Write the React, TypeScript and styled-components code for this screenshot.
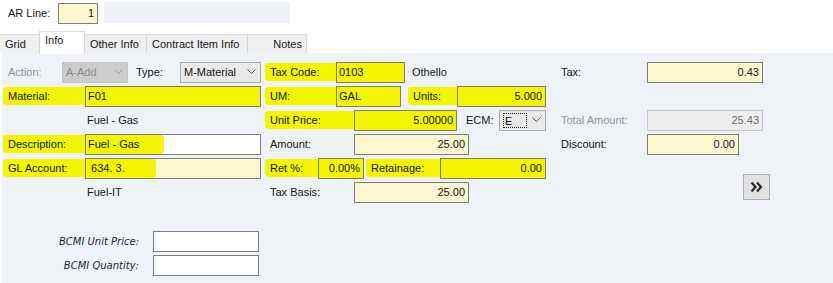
import React from "react";
import styled, { createGlobalStyle, css } from "styled-components";

const GlobalStyle = createGlobalStyle`
  html, body {
    margin: 0;
    padding: 0;
    background: #ffffff;
  }
  body {
    font-family: "Liberation Sans", Arial, sans-serif;
    font-size: 11px;
    color: #141420;
  }
`;

const MARK = "#f5f500";

const Screen = styled.div`
  width: 833px;
  height: 283px;
  overflow: hidden;
  display: flex;
  flex-direction: column;
  background: #ffffff;
`;

const TopBar = styled.div`
  height: 31px;
  display: flex;
  align-items: flex-start;
  padding: 2px 0 0 8px;
  box-sizing: border-box;
`;

const TopLabel = styled.div`
  width: 50px;
  height: 22px;
  line-height: 22px;
`;

const Blank = styled.div`
  width: 186px;
  height: 21px;
  margin-left: 6px;
  background: #eef2f6;
`;

const TabStrip = styled.div`
  display: flex;
  align-items: flex-end;
  height: 22px;
`;

const Tab = styled.div<{ $w: number; $active?: boolean; $right?: boolean }>`
  width: ${(p) => p.$w}px;
  box-sizing: border-box;
  height: ${(p) => (p.$active ? 22 : 19)}px;
  line-height: ${(p) => (p.$active ? 16 : 18)}px;
  padding: 0 ${(p) => (p.$right ? 4 : 0)}px 0 ${(p) => (p.$right ? 0 : 5)}px;
  text-align: ${(p) => (p.$right ? "right" : "left")};
  background: ${(p) => (p.$active ? "#ffffff" : "#f0f0f0")};
  border: 1px solid #d9d9d9;
  border-bottom: none;
  margin-left: -1px;
  position: relative;
  z-index: ${(p) => (p.$active ? 1 : 0)};
  ${(p) =>
    p.$active &&
    css`
      margin-bottom: -1px;
      height: 23px;
    `}
`;

const Panel = styled.div`
  flex: 1;
  margin-left: 2px;
  background: #eff3f7;
  display: flex;
  flex-direction: column;
  padding: 7px 0 0 6px;
  box-sizing: border-box;
`;

const Columns = styled.div`
  display: flex;
`;

const Column = styled.div<{ $w?: number }>`
  display: flex;
  flex-direction: column;
  ${(p) => (p.$w ? `width: ${p.$w}px;` : "flex: 1;")}
`;

const Row = styled.div`
  height: 24px;
  display: flex;
  align-items: center;
`;

const Label = styled.div<{ $w: number; $gap?: number; $gray?: boolean; $mark?: boolean }>`
  width: ${(p) => p.$w}px;
  flex: none;
  box-sizing: border-box;
  margin-left: ${(p) => p.$gap ?? 0}px;
  color: ${(p) => (p.$gray ? "#8f939c" : "#141420")};
  white-space: nowrap;
  height: 18px;
  line-height: 18px;
  ${(p) =>
    p.$mark &&
    css`
      background: ${MARK};
      margin-left: ${(p.$gap ?? 0) - 5}px;
      width: ${p.$w + 5}px;
      padding-left: 5px;
      border-radius: 3px 0 0 4px;
    `}
`;

type Tone = "yellow" | "mark" | "white" | "disabled";

const fieldBg: Record<Tone, string> = {
  yellow: "#fbf8d0",
  mark: MARK,
  white: "#ffffff",
  disabled: "#efefef",
};

const Field = styled.div<{ $w: number; $tone?: Tone; $right?: boolean }>`
  width: ${(p) => p.$w}px;
  flex: none;
  height: 21px;
  box-sizing: border-box;
  border: 1px solid ${(p) => (p.$tone === "disabled" ? "#c6c6c6" : "#7d7d7d")};
  background: ${(p) => fieldBg[p.$tone ?? "yellow"]};
  color: ${(p) => (p.$tone === "disabled" ? "#6e6e6e" : "#141420")};
  padding: 0 3px 0 2px;
  line-height: 19px;
  text-align: ${(p) => (p.$right ? "right" : "left")};
  white-space: nowrap;
  overflow: hidden;
`;

const TextMark = styled.span<{ $w: number }>`
  display: inline-block;
  width: ${(p) => p.$w}px;
  background: ${MARK};
  margin-left: -2px;
  padding-left: 2px;
  border-radius: 0 4px 4px 0;
`;

const Plain = styled.div<{ $gap?: number }>`
  margin-left: ${(p) => p.$gap ?? 0}px;
  padding-left: 2px;
  white-space: nowrap;
`;

const Select = styled.div<{ $w: number; $disabled?: boolean }>`
  width: ${(p) => p.$w}px;
  flex: none;
  height: 21px;
  box-sizing: border-box;
  display: flex;
  align-items: center;
  justify-content: space-between;
  padding: 0 4px 0 3px;
  border: 1px solid ${(p) => (p.$disabled ? "#c4c4c4" : "#adadad")};
  background: ${(p) => (p.$disabled ? "#cccccc" : "#e9e9e9")};
  color: ${(p) => (p.$disabled ? "#8a8a8a" : "#141420")};
`;

const Focus = styled.span`
  display: inline-block;
  width: 24px;
  height: 15px;
  line-height: 15px;
  box-sizing: border-box;
  border: 1px dotted #222;
  padding-left: 1px;
`;

const Chevron = ({ color }: { color: string }) => (
  <svg width="9" height="6" viewBox="0 0 9 6">
    <polyline points="0.5,0.5 4.5,4.5 8.5,0.5" fill="none" stroke={color} strokeWidth="1" />
  </svg>
);

const MoreButton = styled.div`
  width: 27px;
  height: 26px;
  box-sizing: border-box;
  margin: 18px 0 0 182px;
  background: #e1e1e1;
  border: 1px solid #adadad;
  display: flex;
  align-items: center;
  justify-content: center;
`;

const BcmiLabel = styled.div`
  width: 145px;
  padding-right: 14px;
  box-sizing: border-box;
  text-align: right;
  font-family: "DejaVu Sans", Verdana, sans-serif;
  font-size: 10px;
  font-style: italic;
  color: #1c1c38;
`;

export default function App() {
  return (
    <Screen>
      <GlobalStyle />
      <TopBar>
        <TopLabel>AR Line:</TopLabel>
        <Field $w={40} $right style={{ marginTop: 1 }}>1</Field>
        <Blank />
      </TopBar>
      <TabStrip>
        <Tab $w={41}>Grid</Tab>
        <Tab $w={46} $active>Info</Tab>
        <Tab $w={63}>Other Info</Tab>
        <Tab $w={102}>Contract Item Info</Tab>
        <Tab $w={60} $right>Notes</Tab>
      </TabStrip>
      <Panel>
        <Columns>
          <Column $w={262}>
            <Row>
              <Label $w={54} $gray>Action:</Label>
              <Select $w={66} $disabled>
                A-Add <Chevron color="#9a9a9a" />
              </Select>
              <Label $w={44} $gap={8}>Type:</Label>
              <Select $w={81}>
                M-Material <Chevron color="#555" />
              </Select>
            </Row>
            <Row>
              <Label $w={77} $mark>Material:</Label>
              <Field $w={176} $tone="mark">F01</Field>
            </Row>
            <Row>
              <Plain $gap={77}>Fuel - Gas</Plain>
            </Row>
            <Row>
              <Label $w={77} $mark>Description:</Label>
              <Field $w={176} $tone="white">
                <TextMark $w={76}>Fuel - Gas</TextMark>
              </Field>
            </Row>
            <Row>
              <Label $w={77} $mark>GL Account:</Label>
              <Field $w={176}>
                <TextMark $w={68}>&nbsp;634. 3.</TextMark>
              </Field>
            </Row>
            <Row>
              <Plain $gap={77}>Fuel-IT</Plain>
            </Row>
          </Column>
          <Column $w={291}>
            <Row>
              <Label $w={66} $mark>Tax Code:</Label>
              <Field $w={69} $tone="mark">0103</Field>
              <Plain $gap={5}>Othello</Plain>
            </Row>
            <Row>
              <Label $w={66} $mark>UM:</Label>
              <Field $w={65} $tone="mark">GAL</Field>
              <Label $w={44} $gap={12} $mark>Units:</Label>
              <Field $w={89} $tone="mark" $right>5.000</Field>
            </Row>
            <Row>
              <Label $w={84} $mark>Unit Price:</Label>
              <Field $w={103} $tone="mark" $right>5.00000</Field>
              <Label $w={33} $gap={9}>ECM:</Label>
              <Select $w={47}>
                <Focus>E</Focus>
                <Chevron color="#555" />
              </Select>
            </Row>
            <Row>
              <Label $w={84}>Amount:</Label>
              <Field $w={115} $right>25.00</Field>
            </Row>
            <Row>
              <Label $w={48} $mark>Ret %:</Label>
              <Field $w={46} $tone="mark" $right>0.00%</Field>
              <Label $w={69} $gap={7} $mark>Retainage:</Label>
              <Field $w={106} $tone="mark" $right>0.00</Field>
            </Row>
            <Row>
              <Label $w={84}>Tax Basis:</Label>
              <Field $w={115} $right>25.00</Field>
            </Row>
          </Column>
          <Column>
            <Row>
              <Label $w={86}>Tax:</Label>
              <Field $w={116} $right>0.43</Field>
            </Row>
            <Row />
            <Row>
              <Label $w={86} $gray>Total Amount:</Label>
              <Field $w={116} $tone="disabled" $right>25.43</Field>
            </Row>
            <Row>
              <Label $w={86}>Discount:</Label>
              <Field $w={92} $right>0.00</Field>
            </Row>
            <MoreButton>
              <svg width="13" height="12" viewBox="0 0 13 12">
                <polyline points="1.5,1.5 5.5,6 1.5,10.5" fill="none" stroke="#2a2a2a" strokeWidth="2.2" />
                <polyline points="7,1.5 11,6 7,10.5" fill="none" stroke="#2a2a2a" strokeWidth="2.2" />
              </svg>
            </MoreButton>
          </Column>
        </Columns>
        <Row style={{ height: 25 }} />
        <Row>
          <BcmiLabel>BCMI Unit Price:</BcmiLabel>
          <Field $w={106} $tone="white" />
        </Row>
        <Row>
          <BcmiLabel>BCMI Quantity:</BcmiLabel>
          <Field $w={106} $tone="white" />
        </Row>
      </Panel>
    </Screen>
  );
}
